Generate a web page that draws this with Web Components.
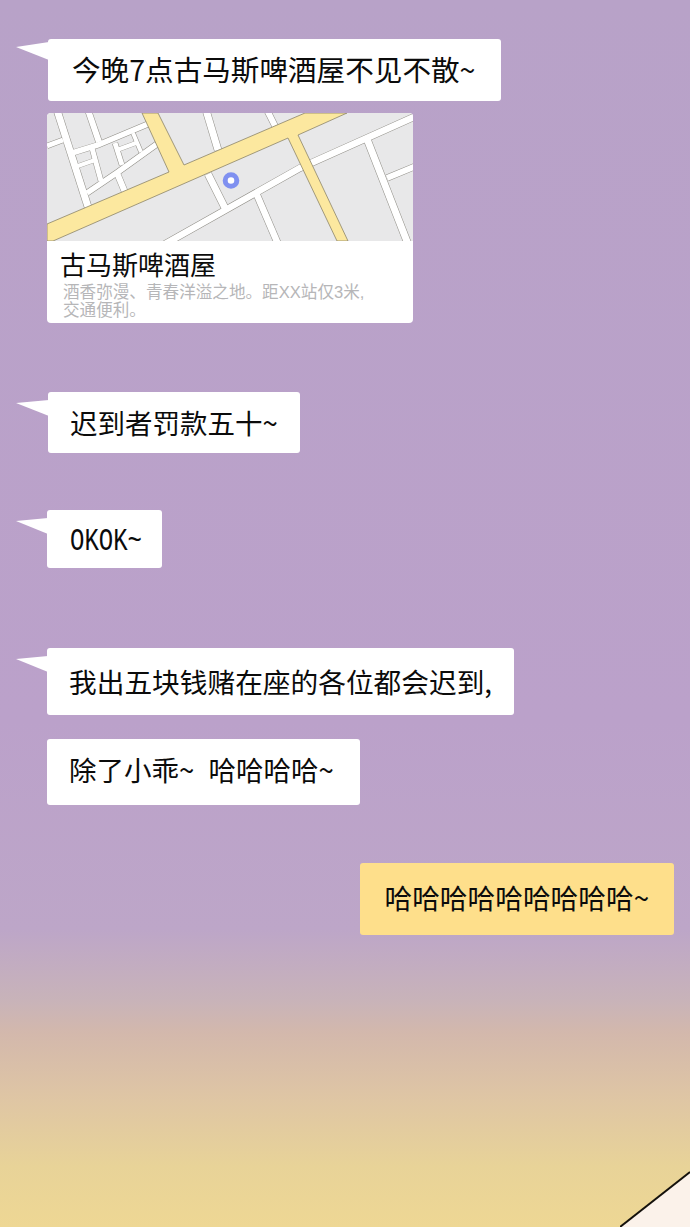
<!DOCTYPE html>
<html lang="zh">
<head>
<meta charset="utf-8">
<title>chat</title>
<style>
	html, body { margin: 0; padding: 0; }
	body { font-family: "Noto Sans CJK SC", "Liberation Sans", sans-serif; }
</style>
</head>
<body>
<chat-page>
	<chat-bubble tail style="--left: 48px; --pad: 24px; --pad-r: 26px; --fs: 28.6px; --h: 62px; --dy: -1px; --tail-top: 3px; --tail-h: 18px; --tail-tip: 5px; margin-top: 39px">今晚7点古马斯啤酒屋不见不散~</chat-bubble>
	<map-card style="margin-top: 12px">
		<span slot="title">古马斯啤酒屋</span>
		酒香弥漫、青春洋溢之地。距XX站仅3米,<br>交通便利。
	</map-card>
	<chat-bubble tail style="--left: 48px; --pad: 22px; --pad-r: 22px; --fs: 27.5px; --h: 61px; margin-top: 69px">迟到者罚款五十~</chat-bubble>
	<chat-bubble tail style="--left: 47px; --pad: 23px; --fs: 32px; --h: 58px; --w: 115px; --sx: .75; --dy: 3px; --latin: 'Liberation Mono'; margin-top: 57px">OKOK~</chat-bubble>
	<chat-bubble tail style="--left: 47px; --pad: 22px; --pad-r: 22px; --fs: 27.7px; --h: 67px; margin-top: 80px">我出五块钱赌在座的各位都会迟到,</chat-bubble>
	<chat-bubble style="--left: 47px; --pad: 22px; --pad-r: 26px; --fs: 27.5px; --h: 66px; --dy: -2px; margin-top: 24px">除了小乖~  哈哈哈哈~</chat-bubble>
	<chat-bubble own style="--pad: 24px; --pad-r: 25px; --fs: 27.7px; --h: 72px; --dy: -1px; margin-top: 58px">哈哈哈哈哈哈哈哈哈~</chat-bubble>
</chat-page>

<script>
class ChatPage extends HTMLElement {
	constructor() {
		super();
		this.attachShadow({ mode: "open" });
		this.shadowRoot.innerHTML = `
			<style>
				:host {
					display: flex;
					flex-direction: column;
					position: relative;
					box-sizing: border-box;
					width: 690px;
					height: 1227px;
					overflow: hidden;
					background: linear-gradient(180deg, #b8a2c8 0, #bba1ca 720px, #bda6c8 930px, #c8b3b9 1000px, #d3b8ac 1033px, #dfc6a4 1100px, #e8d398 1167px, #eed794 1227px);
				}
				svg { position: absolute; right: 0; bottom: 0; display: block; }
			</style>
			<slot></slot>
			<svg width="70" height="56" viewBox="0 0 70 56">
				<polygon points="0,56 70,1 70,56" fill="#fbf2ea"/>
				<line x1="0" y1="56" x2="70" y2="1" stroke="#14110c" stroke-width="2"/>
			</svg>
		`;
	}
}

class ChatBubble extends HTMLElement {
	constructor() {
		super();
		this.attachShadow({ mode: "open" });
		this.shadowRoot.innerHTML = `
			<style>
				:host {
					display: flex;
					align-items: center;
					align-self: flex-start;
					position: relative;
					box-sizing: border-box;
					width: var(--w, auto);
					height: var(--h);
					margin-left: var(--left);
					padding: 0 var(--pad-r, var(--pad)) 0 var(--pad);
					background: #fff;
					border-radius: 3px;
					color: #0b0b0b;
					font-family: var(--latin, "Noto Sans CJK SC"), "Noto Sans CJK SC", sans-serif;
					font-size: var(--fs);
					line-height: 1;
				}
				:host([own]) {
					align-self: flex-end;
					margin-right: 16px;
					background: #fedf8b;
				}
				:host([tail])::before {
					content: "";
					position: absolute;
					left: calc(16px - var(--left));
					top: var(--tail-top, 8px);
					width: calc(var(--left) - 15px);
					height: var(--tail-h, 16px);
					background: #fff;
					clip-path: polygon(0 var(--tail-tip, 3px), 100% 0, 100% 100%);
				}
				.text {
					display: block;
					white-space: pre;
					word-spacing: 1px;
					transform: translateY(var(--dy, 0)) scaleX(var(--sx, 1));
					transform-origin: left center;
				}
			</style>
			<span class="text"><slot></slot></span>
		`;
	}
}

class MapThumb extends HTMLElement {
	constructor() {
		super();
		this.attachShadow({ mode: "open" });
		// [points, width], page coordinates of the reference
		const roads = [
			["165,244 300,168 416,116", 6.5],
			["57,110 89,210", 7],
			["88,110 99,142", 6],
			["47,146 63,140", 5],
			["72,153 98,145 148,124", 5.5],
			["87,193 118,172 157,144", 5.5],
			["117,173 127,197", 6],
			["92,148 101,181", 5],
			["75,167 95,160", 4],
			["115,143 122,165", 5],
			["117,150 136,143", 4],
			["133,133 141,152", 4],
			["367,139 408,244", 7],
			["387,178 416,166", 6],
			["257,195 278,244", 6.5],
			["206,110 218,150", 7],
			["267,110 275,126", 6],
			["208,174 225,208", 7],
		];
		const pass = (stroke, extra) => roads.map(([points, w]) =>
			`<polyline points="${points}" fill="none" stroke="${stroke}" stroke-width="${w + extra}"/>`
		).join("");
		this.shadowRoot.innerHTML = `
			<style>
				:host { display: block; height: 128px; overflow: hidden; background: #e8e8e9; }
				svg { display: block; filter: blur(.4px); }
			</style>
			<svg width="366" height="128" viewBox="47 113 366 128">
				${pass("#8f8d86", 1)}
				${pass("#fff", 0)}
				<polygon points="47,224 169,172 142,113 158,113 184,165 305,113 347,113 298,135 348,241 337,241 288,138 53,241 47,241" fill="#fce89f" stroke="#8c8468" stroke-width=".8" stroke-linejoin="round"/>
				<circle cx="231" cy="180.5" r="5.8" fill="#fff" stroke="#7f90f0" stroke-width="5"/>
			</svg>
		`;
	}
}

class MapCard extends HTMLElement {
	constructor() {
		super();
		this.attachShadow({ mode: "open" });
		this.shadowRoot.innerHTML = `
			<style>
				:host {
					display: flex;
					flex-direction: column;
					align-self: flex-start;
					box-sizing: border-box;
					width: 366px;
					height: 210px;
					margin-left: 47px;
					overflow: hidden;
					background: #fff;
					border-radius: 4px;
				}
				.title {
					padding: 8px 0 0 13px;
					color: #0b0b0b;
					font-size: 26px;
					line-height: 30px;
				}
				.desc {
					padding: 5px 0 0 16px;
					color: #b6b6b8;
					font-family: "Liberation Sans", "Noto Sans CJK SC", sans-serif;
					font-size: 16.6px;
					line-height: 18px;
					white-space: nowrap;
				}
			</style>
			<map-thumb></map-thumb>
			<div class="title"><slot name="title"></slot></div>
			<div class="desc"><slot></slot></div>
		`;
	}
}

customElements.define("chat-page", ChatPage);
customElements.define("chat-bubble", ChatBubble);
customElements.define("map-thumb", MapThumb);
customElements.define("map-card", MapCard);
</script>
</body>
</html>
